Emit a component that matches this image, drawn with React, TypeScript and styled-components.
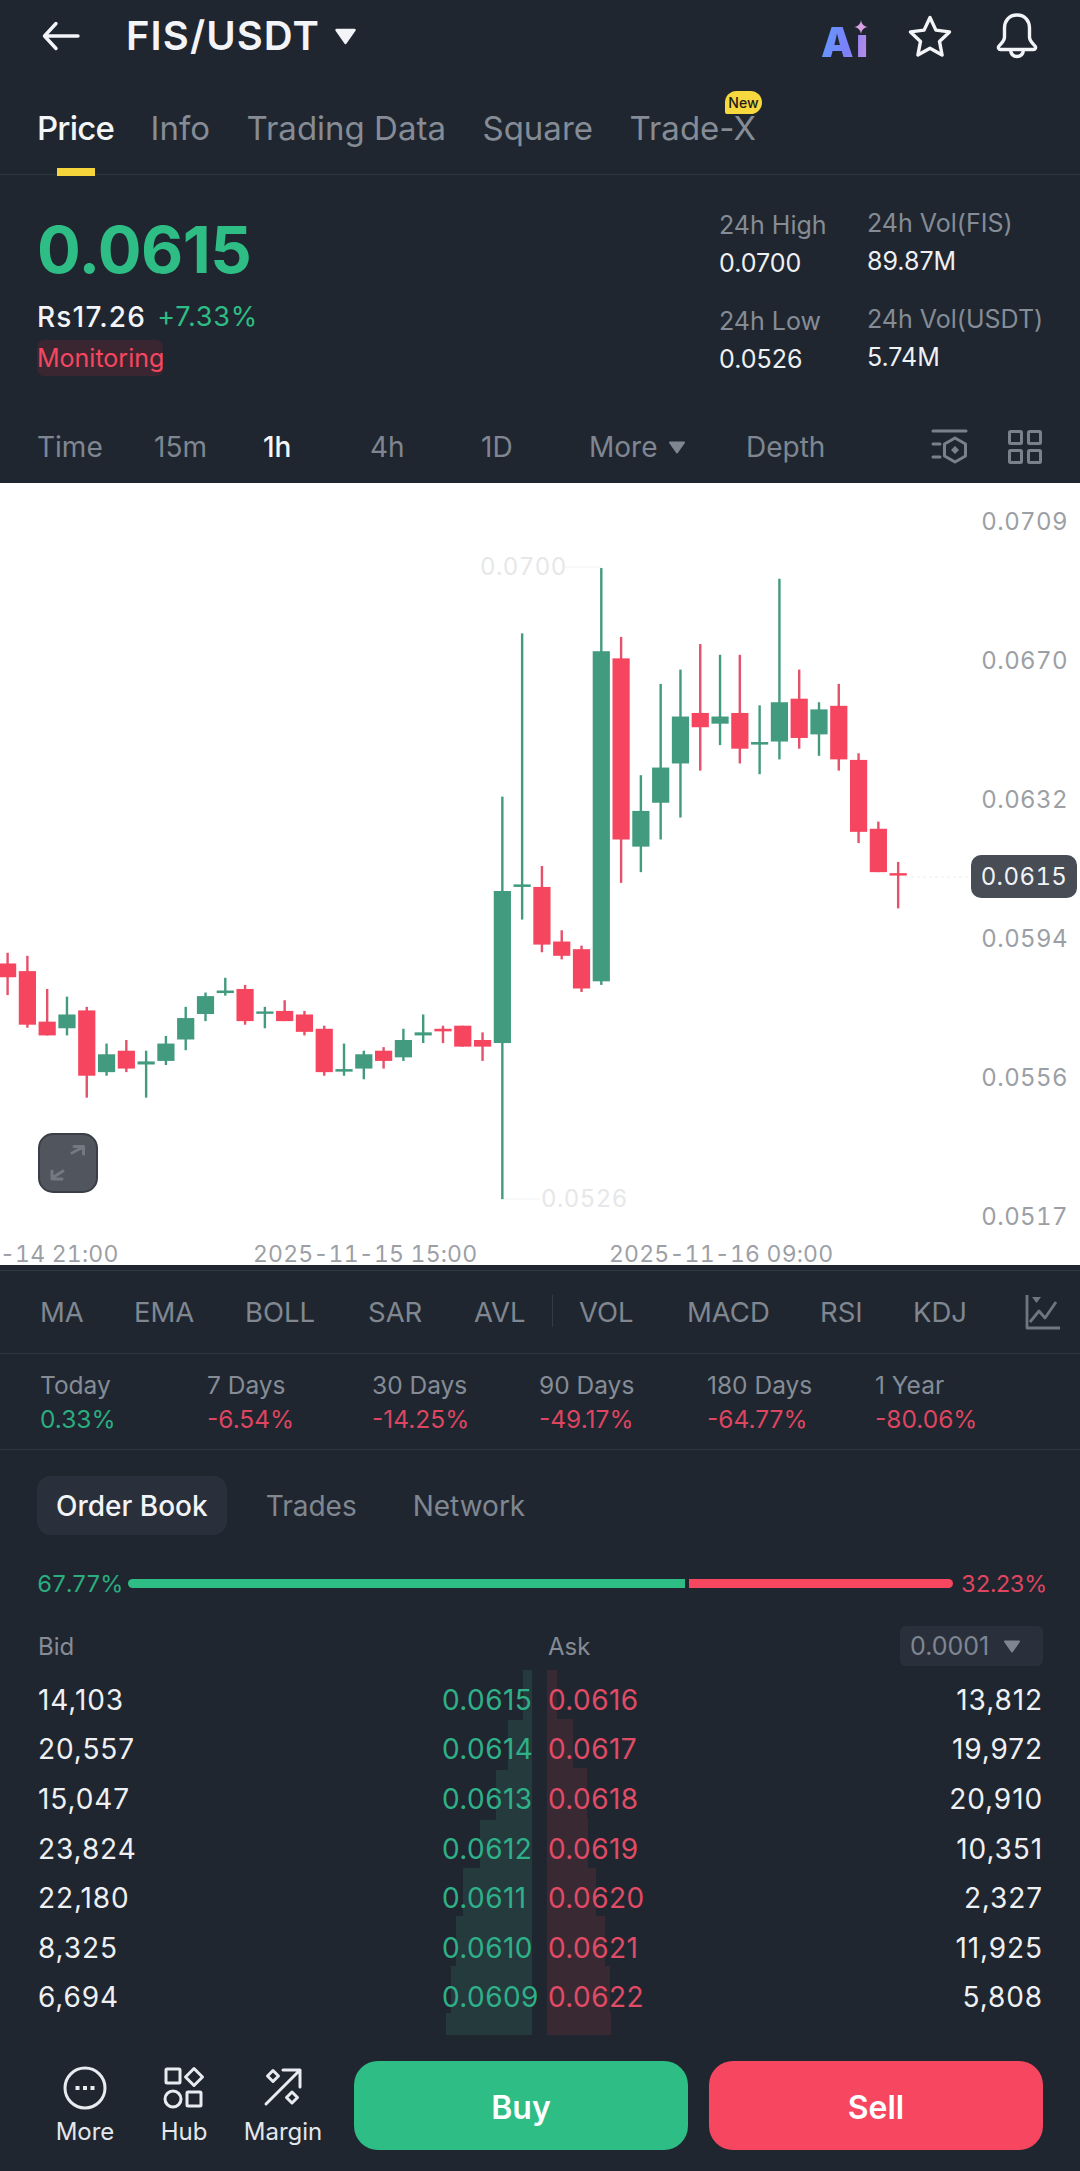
import React from "react";
import styled, { createGlobalStyle } from "styled-components";

const BG = "#1f262f";
const GREEN = "#2dbd85";
const RED = "#f7465f";
const FONT = `"Inter", "Lato", "Liberation Sans", sans-serif`;

const Global = createGlobalStyle`
  html, body { margin: 0; padding: 0; background: ${BG}; }
  body { font-family: ${FONT}; overflow: hidden; }
  * { box-sizing: border-box; }
`;

const Page = styled.div`
  position: relative;
  width: 1080px;
  height: 2171px;
  background: ${BG};
  color: #eef0f3;
  overflow: hidden;
`;

const TopBar = styled.header`
  height: 72px;
  display: flex;
  align-items: center;
  padding: 0 42px;
`;
const Title = styled.h1`
  margin: 0 14px 0 46px;
  font-size: 40px;
  font-weight: 600;
  letter-spacing: 1.1px;
  line-height: 72px;
  color: #f2f4f7;
`;
const TopActions = styled.div`
  margin-left: auto;
  display: flex;
  align-items: center;
`;
const AiMark = styled.div`
  position: relative;
  width: 46px;
  height: 44px;
  margin-right: 41px;
  margin-top: 6px;
`;
const AiText = styled.span`
  position: absolute;
  left: 0;
  bottom: 0;
  font-size: 41px;
  line-height: 38px;
  font-weight: 900;
  letter-spacing: 2.5px;
  background: linear-gradient(100deg, #5f9bff 0%, #7d80f8 55%, #c98fe0 100%);
  -webkit-background-clip: text;
  background-clip: text;
  color: transparent;
`;
const Sparkle = styled.svg`
  position: absolute;
  right: -1px;
  top: 3px;
  background: ${BG};
`;

const Tabs = styled.nav`
  position: relative;
  height: 103px;
  display: flex;
  gap: 36.5px;
  padding: 37px 37px 0;
  border-bottom: 1px solid #2f3741;
`;
const Tab = styled.div<{ $active?: boolean }>`
  position: relative;
  height: 66px;
  font-size: 33px;
  line-height: 38px;
  font-weight: ${(p) => (p.$active ? 500 : 400)};
  letter-spacing: ${(p) => (p.$active ? "-0.8px" : "0")};
  color: ${(p) => (p.$active ? "#f4f5f7" : "#858c96")};
  white-space: nowrap;
`;
const TabMark = styled.span`
  position: absolute;
  left: 20px;
  bottom: -1px;
  width: 38px;
  height: 8px;
  background: #f4d43a;
`;
const NewBadge = styled.span`
  position: absolute;
  right: -6px;
  top: -18px;
  width: 37px;
  height: 23px;
  border-radius: 12px 12px 12px 2px;
  background: #f7d93f;
  color: #1b1b1b;
  font-size: 14px;
  line-height: 23px;
  text-align: center;
  font-weight: 500;
  letter-spacing: 0;
`;

const Summary = styled.section`
  height: 240px;
  display: flex;
  padding-left: 37px;
`;
const PriceCol = styled.div`
  flex: 1;
  padding-top: 40px;
`;
const BigPrice = styled.div`
  font-size: 65px;
  line-height: 70px;
  font-weight: 700;
  color: ${GREEN};
  letter-spacing: -0.5px;
`;
const FiatRow = styled.div`
  margin-top: 17px;
  display: flex;
  gap: 11px;
  line-height: 30px;
`;
const Fiat = styled.span`
  font-size: 28px;
  letter-spacing: 1.2px;
  font-weight: 500;
  color: #f2f4f7;
`;
const Change = styled.span`
  font-size: 27px;
  letter-spacing: 0.8px;
  color: ${GREEN};
`;
const Monitor = styled.div`
  display: inline-block;
  margin-top: 8px;
  height: 36px;
  width: 126px;
  border-radius: 7px;
  background: #3a2631;
  color: ${RED};
  font-size: 25px;
  line-height: 36px;
  white-space: nowrap;
`;
const StatCol = styled.div<{ $top: number; $w: number }>`
  width: ${(p) => p.$w}px;
  padding-top: ${(p) => p.$top}px;
`;
const StatLabel = styled.div`
  font-size: 25px;
  line-height: 30px;
  color: #858c96;
  white-space: nowrap;
`;
const StatValue = styled.div`
  margin: 8px 0 28px;
  font-size: 25px;
  line-height: 30px;
  color: #eef0f3;
`;

const Frames = styled.div`
  height: 68px;
  padding: 0 38px 4px 37px;
  display: grid;
  grid-template-columns: 117px 109px 107px 111px 108px 157px 1fr auto;
  align-items: center;
`;
const Frame = styled.div<{ $active?: boolean }>`
  display: flex;
  align-items: center;
  gap: 11px;
  font-size: 28px;
  color: ${(p) => (p.$active ? "#f4f5f7" : "#7f8691")};
  font-weight: ${(p) => (p.$active ? 500 : 400)};
`;
const FrameIcons = styled.div`
  display: flex;
  gap: 39px;
  align-items: center;
`;

const Chart = styled.section`
  position: relative;
  height: 782px;
  background: #ffffff;
  font-variant-numeric: tabular-nums;
`;
const ChartSvg = styled.svg`
  display: block;
`;
const PriceAxis = styled.div`
  position: absolute;
  right: 12px;
  top: 25px;
  height: 723px;
  display: flex;
  flex-direction: column;
  justify-content: space-between;
  align-items: flex-end;
  color: #9c9fa5;
  font-size: 24px;
  line-height: 28px;
  letter-spacing: 0.4px;
`;
const LastPrice = styled.div`
  position: absolute;
  left: 971px;
  top: 372px;
  width: 106px;
  height: 43px;
  border-radius: 10px;
  background: #474c55;
  color: #f2f3f5;
  font-size: 24px;
  line-height: 43px;
  letter-spacing: 0.4px;
  text-align: center;
`;
const TimeLabel = styled.div<{ $left: number }>`
  position: absolute;
  left: ${(p) => p.$left}px;
  bottom: 0;
  color: #9c9fa5;
  font-size: 23px;
  line-height: 22px;
  letter-spacing: 0.2px;
  white-space: nowrap;
`;
const Extreme = styled.div<{ $left: number; $top: number }>`
  position: absolute;
  left: ${(p) => p.$left}px;
  top: ${(p) => p.$top}px;
  color: #e6e7e9;
  font-size: 24px;
  line-height: 28px;
  letter-spacing: 0.4px;
`;
const Expand = styled.button`
  position: absolute;
  left: 38px;
  top: 650px;
  width: 60px;
  height: 60px;
  padding: 0;
  border-radius: 15px;
  border: 2px solid #3a3f47;
  background: #50555e;
  display: flex;
  align-items: center;
  justify-content: center;
`;

const Indicators = styled.div`
  height: 84px;
  margin-top: 5px;
  padding: 0 20px 0 40px;
  border-top: 1px solid #2f3741;
  border-bottom: 1px solid #2f3741;
  display: grid;
  grid-template-columns: 94px 111px 123px 106px 105px 108px 133px 93px 112px auto;
  align-items: center;
`;
const Indicator = styled.div<{ $divided?: boolean }>`
  position: relative;
  font-size: 27.5px;
  color: #808791;
  white-space: nowrap;
  ${(p) =>
    p.$divided &&
    `&::before { content: ""; position: absolute; left: -27px; top: 0; width: 1px; height: 32px; background: #333b46; }`}
`;

const Periods = styled.div`
  height: 96px;
  padding: 15px 0 0 40px;
  border-bottom: 1px solid #2f3741;
  display: grid;
  grid-template-columns: 167px 165px 167px 168px 168px 1fr;
`;
const PeriodLabel = styled.div`
  font-size: 24.5px;
  line-height: 32px;
  color: #858c96;
`;
const PeriodValue = styled.div<{ $up?: boolean }>`
  margin-top: 2px;
  font-size: 24.5px;
  line-height: 32px;
  color: ${(p) => (p.$up ? "#2bad80" : "#dd4560")};
`;

const BookTabs = styled.div`
  display: flex;
  align-items: center;
  margin: 26px 0 0 37px;
  height: 59px;
`;
const BookTab = styled.div<{ $active?: boolean; $gap: number }>`
  height: 59px;
  line-height: 60px;
  padding: 0 19px;
  margin-right: ${(p) => p.$gap}px;
  border-radius: 14px;
  font-size: 28px;
  font-weight: ${(p) => (p.$active ? 500 : 400)};
  background: ${(p) => (p.$active ? "#2a303b" : "transparent")};
  color: ${(p) => (p.$active ? "#f2f4f7" : "#808791")};
`;

const Ratio = styled.div`
  margin-top: 33px;
  padding: 0 37px;
  height: 30px;
  display: flex;
  align-items: center;
`;
const RatioText = styled.span<{ $up?: boolean }>`
  width: 83px;
  font-size: 23.5px;
  letter-spacing: -0.8px;
  font-variant-numeric: tabular-nums;
  color: ${(p) => (p.$up ? "#2bad80" : "#dd4560")};
  white-space: nowrap;
`;
const RatioBar = styled.div<{ $up?: boolean; $w: number }>`
  width: ${(p) => p.$w}px;
  height: 9px;
  background: ${(p) => (p.$up ? GREEN : RED)};
  border-radius: ${(p) => (p.$up ? "5px 0 0 5px" : "0 5px 5px 0")};
`;
const Bars = styled.div`
  flex: 1;
  margin: 0 8px;
  display: flex;
  gap: 4px;
`;

const Book = styled.section`
  position: relative;
  margin-top: 28px;
  padding: 0 37px 0 38px;
`;
const Depth = styled.svg`
  position: absolute;
  left: 440px;
  top: 44px;
`;
const BookHalves = styled.div`
  position: relative;
  display: grid;
  grid-template-columns: 493px 495px;
  column-gap: 17px;
  align-items: center;
`;
const BookHead = styled(BookHalves)`
  height: 40px;
  margin-bottom: 9px;
  font-size: 24px;
  color: #858c96;
`;
const Half = styled.div`
  display: flex;
  justify-content: space-between;
  align-items: center;
`;
const Step = styled.div`
  width: 143px;
  height: 40px;
  border-radius: 6px;
  background: #2a303b;
  padding-left: 10px;
  display: flex;
  align-items: center;
  gap: 14px;
  color: #7f8691;
  font-size: 25px;
`;
const BookRow = styled(BookHalves)`
  height: 49.6px;
  font-size: 28px;
`;
const Qty = styled.span`
  letter-spacing: 0.9px;
  color: #eef0f3;
`;
const Bid = styled.span`
  width: 89px;
  letter-spacing: 0.4px;
  color: #2fb088;
`;
const Ask = styled.span`
  letter-spacing: 0.4px;
  color: #e04b66;
`;

const Footer = styled.footer`
  position: absolute;
  left: 0;
  top: 2061px;
  width: 1080px;
  height: 89px;
  display: flex;
  align-items: center;
  padding: 0 37px 0 0;
`;
const Tools = styled.div`
  width: 354px;
  display: grid;
  grid-template-columns: 86px 112px 86px;
  padding-left: 42px;
`;
const Tool = styled.div`
  display: flex;
  flex-direction: column;
  align-items: center;
  gap: 8px;
  font-size: 24px;
  line-height: 28px;
  color: #e4e7ec;
`;
const Trade = styled.button<{ $sell?: boolean }>`
  flex: 1;
  height: 89px;
  border: none;
  border-radius: 24px;
  padding: 3px 0 0;
  margin-left: ${(p) => (p.$sell ? 21 : 0)}px;
  background: ${(p) => (p.$sell ? RED : GREEN)};
  color: #fff;
  font: 600 32px ${FONT};
`;

type C = [0 | 1, number, number, number, number];
const candles: C[] = [
  [0, 907, 928, 955, 990], [0, 913, 943, 1048, 1054], [0, 978, 1042, 1069, 1069], [1, 993, 1028, 1055, 1069],
  [0, 1013, 1020, 1148, 1191], [1, 1085, 1106, 1141, 1148], [0, 1078, 1099, 1134, 1141], [1, 1099, 1120, 1126, 1191],
  [1, 1070, 1085, 1119, 1127], [1, 1013, 1035, 1077, 1098], [1, 985, 992, 1027, 1041], [1, 956, 981, 986, 991],
  [0, 970, 978, 1041, 1048], [1, 1013, 1022, 1026, 1055], [0, 1000, 1021, 1041, 1041], [0, 1021, 1028, 1062, 1069],
  [0, 1050, 1056, 1141, 1148], [1, 1085, 1135, 1140, 1148], [1, 1099, 1106, 1134, 1155], [0, 1092, 1099, 1119, 1134],
  [1, 1056, 1078, 1112, 1119], [1, 1028, 1063, 1069, 1084], [0, 1050, 1056, 1061, 1084], [0, 1050, 1050, 1091, 1091],
  [0, 1063, 1078, 1091, 1119], [1, 601, 786, 1084, 1390], [1, 281, 773, 778, 842], [0, 737, 778, 891, 906],
  [0, 863, 885, 913, 920], [0, 893, 900, 977, 984], [1, 153, 316, 963, 970], [0, 288, 330, 685, 770],
  [1, 559, 629, 699, 749], [1, 380, 544, 613, 685], [1, 352, 444, 536, 642], [0, 302, 437, 465, 550],
  [1, 323, 444, 458, 500], [0, 323, 437, 507, 536], [1, 422, 494, 499, 557], [1, 174, 416, 493, 528],
  [0, 352, 409, 486, 507], [1, 416, 430, 479, 521], [0, 380, 423, 528, 550], [0, 516, 529, 670, 692],
  [0, 650, 664, 749, 749], [0, 729, 751, 755, 820],
];
const toY = (z: number) => 7 + z / 1.96;

const Candles = () => (
  <ChartSvg width={1080} height={782} viewBox="0 0 1080 782">
    <g stroke="#f2f3f4" strokeWidth="1.2">
      <line x1="562" y1="84" x2="602" y2="84" />
      <line x1="503" y1="716" x2="540" y2="716" />
    </g>
    <line x1="905" y1="394" x2="968" y2="394" stroke="#eceded" strokeWidth="1" strokeDasharray="3 3" />
    {candles.map(([up, hi, top, bot, lo], i) => {
      const x = 7.6 + i * 19.79;
      const fill = up ? "#429a7f" : "#f6455f";
      const wick = up ? "#429a7f" : "#e5516a";
      return (
        <g key={i}>
          <rect x={x - 1.2} y={toY(hi)} width={2.4} height={toY(lo) - toY(hi)} fill={wick} />
          <rect x={x - 8.6} y={toY(top)} width={17.2} height={Math.max(toY(bot) - toY(top), 2.4)} fill={fill} />
        </g>
      );
    })}
  </ChartSvg>
);

const stepsG = [
  [523, 50], [508, 50], [496, 50], [480, 48], [463, 48], [456, 50], [451, 47], [446, 22],
];
const stepsR = [
  [557, 49], [573, 49], [587, 50], [588, 50], [596, 48], [605, 50], [610, 47], [611, 22],
];
const DepthChart = () => {
  let yG = 0;
  let yR = 0;
  return (
    <Depth width={180} height={366} viewBox="440 1671 180 366">
      {stepsG.map(([l, h], i) => {
        const y = 1671 + yG;
        yG += h;
        return <rect key={i} x={l} y={y} width={532 - l} height={h} fill="#243a3d" />;
      })}
      {stepsR.map(([r, h], i) => {
        const y = 1671 + yR;
        yR += h;
        return <rect key={i} x={547} y={y} width={r - 547} height={h} fill="#392933" />;
      })}
    </Depth>
  );
};

const Tri = ({ c, w = 18, h = 13 }: { c: string; w?: number; h?: number }) => (
  <svg width={w} height={h} viewBox="0 0 18 13">
    <path d="M2 1.5h14L9 11.5z" fill={c} stroke={c} strokeWidth="2" strokeLinejoin="round" />
  </svg>
);

const rows: [string, string, string, string][] = [
  ["14,103", "0.0615", "0.0616", "13,812"],
  ["20,557", "0.0614", "0.0617", "19,972"],
  ["15,047", "0.0613", "0.0618", "20,910"],
  ["23,824", "0.0612", "0.0619", "10,351"],
  ["22,180", "0.0611", "0.0620", "2,327"],
  ["8,325", "0.0610", "0.0621", "11,925"],
  ["6,694", "0.0609", "0.0622", "5,808"],
];
const periods: [string, string, boolean][] = [
  ["Today", "0.33%", true],
  ["7 Days", "-6.54%", false],
  ["30 Days", "-14.25%", false],
  ["90 Days", "-49.17%", false],
  ["180 Days", "-64.77%", false],
  ["1 Year", "-80.06%", false],
];

export default function App() {
  return (
    <Page>
      <Global />
      <TopBar>
        <svg width="38" height="30" viewBox="0 0 38 30" fill="none" stroke="#f2f4f7" strokeWidth="3.4" strokeLinecap="round" strokeLinejoin="round">
          <path d="M36 15H3M14 2.5L2.5 15 14 27.5" />
        </svg>
        <Title>FIS/USDT</Title>
        <Tri c="#f2f4f7" w={23} h={17} />
        <TopActions>
          <AiMark>
            <AiText>Ai</AiText>
            <Sparkle width="14" height="14" viewBox="0 0 14 14">
              <path d="M7 0c.6 4 2.6 6.2 7 7-4.4.8-6.4 3-7 7-.6-4-2.6-6.2-7-7 4.4-.8 6.4-3 7-7z" fill="#d9a0e6" />
            </Sparkle>
          </AiMark>
          <svg width="44" height="42" viewBox="0 0 44 42" fill="none" stroke="#f2f4f7" strokeWidth="3.4" strokeLinejoin="round">
            <path d="M22 2.5l5.9 12.6 13.6 1.8-10 9.5 2.6 13.6L22 33.3 9.9 40l2.6-13.6-10-9.5 13.6-1.8z" />
          </svg>
          <svg style={{ marginLeft: 44 }} width="42" height="46" viewBox="0 0 42 46" fill="none" stroke="#f2f4f7" strokeWidth="3.4" strokeLinejoin="round" strokeLinecap="round">
            <path d="M21 2c-8 0-12.5 6-12.5 13v9c0 4-3 6-5.500 9-1.200 1.600-.4 3.500 1.500 3.500h33c1.900 0 2.700-1.900 1.500-3.500-2.500-3-5.500-5-5.500-9v-9C33.500 8 29 2 21 2z" />
            <path d="M14.500 37c.5 4 3 6.500 6.500 6.500s6-2.500 6.500-6.500" />
          </svg>
        </TopActions>
      </TopBar>

      <Tabs>
        <Tab $active>
          Price
          <TabMark />
        </Tab>
        <Tab>Info</Tab>
        <Tab>Trading Data</Tab>
        <Tab>Square</Tab>
        <Tab>
          Trade-X
          <NewBadge>New</NewBadge>
        </Tab>
      </Tabs>

      <Summary>
        <PriceCol>
          <BigPrice>0.0615</BigPrice>
          <FiatRow>
            <Fiat>Rs17.26</Fiat>
            <Change>+7.33%</Change>
          </FiatRow>
          <Monitor>Monitoring</Monitor>
        </PriceCol>
        <StatCol $top={35} $w={148}>
          <StatLabel>24h High</StatLabel>
          <StatValue>0.0700</StatValue>
          <StatLabel>24h Low</StatLabel>
          <StatValue>0.0526</StatValue>
        </StatCol>
        <StatCol $top={33} $w={213}>
          <StatLabel>24h Vol(FIS)</StatLabel>
          <StatValue>89.87M</StatValue>
          <StatLabel>24h Vol(USDT)</StatLabel>
          <StatValue>5.74M</StatValue>
        </StatCol>
      </Summary>

      <Frames>
        <Frame>Time</Frame>
        <Frame>15m</Frame>
        <Frame $active>1h</Frame>
        <Frame>4h</Frame>
        <Frame>1D</Frame>
        <Frame>
          More
          <Tri c="#7f8691" />
        </Frame>
        <Frame>Depth</Frame>
        <FrameIcons>
          <svg width="38" height="38" viewBox="0 0 38 38" fill="none" stroke="#7b818b" strokeWidth="3" strokeLinecap="round" strokeLinejoin="round">
            <path d="M2 3h33M2 16h7M2 29h7" />
            <path d="M24 10l10.500 6v12L24 34l-10.500-6V16z" />
            <path d="M24 18l4 4-4 4-4-4z" fill="#7b818b" stroke="none" />
          </svg>
          <svg width="34" height="34" viewBox="0 0 34 34" fill="none" stroke="#7b818b" strokeWidth="3">
            <rect x="1.500" y="1.500" width="12" height="12" rx="1" />
            <rect x="20.500" y="1.500" width="12" height="12" rx="1" />
            <rect x="1.500" y="20.500" width="12" height="12" rx="1" />
            <rect x="20.500" y="20.500" width="12" height="12" rx="1" />
          </svg>
        </FrameIcons>
      </Frames>

      <Chart>
        <Candles />
        <PriceAxis>
          <span>0.0709</span>
          <span>0.0670</span>
          <span>0.0632</span>
          <span>0.0594</span>
          <span>0.0556</span>
          <span>0.0517</span>
        </PriceAxis>
        <LastPrice>0.0615</LastPrice>
        <Extreme $left={480} $top={70}>0.0700</Extreme>
        <Extreme $left={541} $top={702}>0.0526</Extreme>
        <Expand aria-label="expand">
          <svg width="38" height="36" viewBox="0 0 38 36" fill="none" stroke="#737982" strokeWidth="3" strokeLinecap="round" strokeLinejoin="round">
            <path d="M23 8l11-6M25 1.500h9.500V9" />
            <path d="M3 33l11-7M13 34H3v-8" />
          </svg>
        </Expand>
        <TimeLabel $left={0}>-14 21:00</TimeLabel>
        <TimeLabel $left={253}>2025-11-15 15:00</TimeLabel>
        <TimeLabel $left={609}>2025-11-16 09:00</TimeLabel>
      </Chart>

      <Indicators>
        {["MA", "EMA", "BOLL", "SAR", "AVL"].map((t) => (
          <Indicator key={t}>{t}</Indicator>
        ))}
        <Indicator $divided>VOL</Indicator>
        {["MACD", "RSI", "KDJ"].map((t) => (
          <Indicator key={t}>{t}</Indicator>
        ))}
        <svg width="36" height="36" viewBox="0 0 36 36" fill="none" stroke="#6f7680" strokeWidth="2.800" strokeLinejoin="round">
          <path d="M2 1v33h33" />
          <path d="M5 28l9-11 6 7 11-16" />
          <path d="M7 3h9l-4.500 6z" fill="#6f7680" stroke="none" />
        </svg>
      </Indicators>

      <Periods>
        {periods.map(([l, v, up]) => (
          <div key={l}>
            <PeriodLabel>{l}</PeriodLabel>
            <PeriodValue $up={up}>{v}</PeriodValue>
          </div>
        ))}
      </Periods>

      <BookTabs>
        <BookTab $active $gap={20}>Order Book</BookTab>
        <BookTab $gap={18}>Trades</BookTab>
        <BookTab $gap={0}>Network</BookTab>
      </BookTabs>

      <Ratio>
        <RatioText $up>67.77%</RatioText>
        <Bars>
          <RatioBar $up $w={557} />
          <RatioBar $w={264} />
        </Bars>
        <RatioText>32.23%</RatioText>
      </Ratio>

      <Book>
        <DepthChart />
        <BookHead>
          <Half>Bid</Half>
          <Half>
            Ask
            <Step>
              0.0001
              <Tri c="#7f8691" />
            </Step>
          </Half>
        </BookHead>
        {rows.map(([a, b, c, d]) => (
          <BookRow key={b}>
            <Half>
              <Qty>{a}</Qty>
              <Bid>{b}</Bid>
            </Half>
            <Half>
              <Ask>{c}</Ask>
              <Qty>{d}</Qty>
            </Half>
          </BookRow>
        ))}
      </Book>

      <Footer>
        <Tools>
          <Tool>
            <svg width="44" height="44" viewBox="0 0 44 44" fill="none" stroke="#e8ebf0" strokeWidth="3">
              <circle cx="22" cy="22" r="20" />
              <path d="M12.500 22h4M20 22h4M27.500 22h4" strokeWidth="4" />
            </svg>
            More
          </Tool>
          <Tool>
            <svg width="44" height="44" viewBox="0 0 44 44" fill="none" stroke="#e8ebf0" strokeWidth="3" strokeLinejoin="round">
              <rect x="4" y="3" width="14" height="14" rx="1" />
              <path d="M32 2.500l8.500 8.500-8.500 8.500-8.500-8.500z" />
              <circle cx="11" cy="33" r="8" />
              <rect x="25" y="26" width="14" height="14" rx="1" />
            </svg>
            Hub
          </Tool>
          <Tool>
            <svg width="44" height="44" viewBox="0 0 44 44" fill="none" stroke="#e8ebf0" strokeWidth="3" strokeLinecap="round" strokeLinejoin="round">
              <path d="M5 38L39 4M22 4h17v17" />
              <path d="M12 4.500l5.500 5.500-5.500 5.500-5.500-5.500zM31 26l5.500 5.500L31 37l-5.500-5.500z" />
            </svg>
            Margin
          </Tool>
        </Tools>
        <Trade>Buy</Trade>
        <Trade $sell>Sell</Trade>
      </Footer>
    </Page>
  );
}
